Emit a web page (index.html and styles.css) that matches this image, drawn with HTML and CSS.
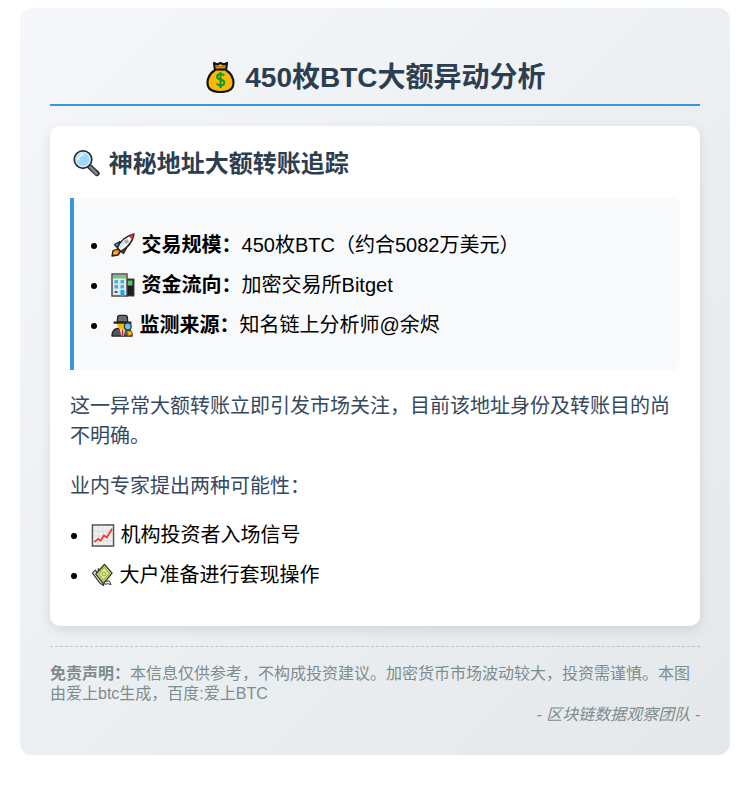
FILE: index.html
```html
<!DOCTYPE html>
<html lang="zh-CN">
<head>
<meta charset="utf-8">
<title>450枚BTC大额异动分析</title>
<link rel="stylesheet" href="styles.css">
</head>
<body>
<svg class="defs" width="0" height="0" aria-hidden="true">
  <symbol id="e-bag" viewBox="0 0 33 32">
    <path d="M10 2 13.300 3.500 16.500 2l3.200 1.500L23 2l-1 7c4.500 3 7.500 8 7.500 13 0 6-4.500 9-13 9s-13-3-13-9c0-5 3-10 7.500-13z" fill="#fdb900" stroke="#111" stroke-width="2.200" stroke-linejoin="round"/>
    <path d="M11 8.500h11" stroke="#111" stroke-width="2.200" fill="none"/>
    <path d="M11.500 5.800h10" stroke="#b87800" stroke-width="1.600" fill="none"/>
    <path d="M20.300 14.500c-1-1.200-2.400-1.600-3.800-1.600-2 0-3.500 1-3.500 2.800 0 3.800 7.300 1.900 7.300 5.800 0 1.800-1.700 2.900-3.800 2.900-1.500 0-3-.6-4-1.800M16.500 11v16" stroke="#0a9a2c" stroke-width="2" fill="none"/>
  </symbol>
  <symbol id="e-lens" viewBox="0 0 32 32">
    <path d="M19 19.500 28 28" stroke="#2b2f33" stroke-width="6" stroke-linecap="round"/>
    <path d="M20 20.500 27.500 28" stroke="#7d8b92" stroke-width="3" stroke-linecap="round"/>
    <circle cx="12" cy="12" r="10" fill="#8fd0f5" stroke="#2b2f33" stroke-width="2"/>
    <circle cx="12" cy="12" r="8" fill="#9fd8fa" stroke="#dbe6ec" stroke-width="1.500"/>
    <path d="M6.500 13a6 6 0 0 1 6-6.500" stroke="#e6f6ff" stroke-width="2" fill="none"/>
  </symbol>
  <symbol id="e-rocket" viewBox="0 0 24 24">
    <path d="M7 16 2 17.500 1 23l6-1 2.500-3.500z" fill="#f08a12" stroke="#222" stroke-width="1.300" stroke-linejoin="round"/>
    <path d="M3.500 20.500 4 19l2 1.500z" fill="#ffd23c" stroke="#ffd23c"/>
    <path d="M9 8.500 3.500 11.500 7 15.500z" fill="#2ea6ee" stroke="#222" stroke-width="1.300" stroke-linejoin="round"/>
    <path d="M15.500 15 12.500 20.500 8.500 17z" fill="#e8302a" stroke="#222" stroke-width="1.300" stroke-linejoin="round"/>
    <path d="M6.500 15C9 8 15 3 23 1c-1.500 8-6 13.500-13 17.500z" fill="#fff" stroke="#222" stroke-width="1.500" stroke-linejoin="round"/>
    <path d="M8 15.500C10 10 13 8 14.500 7c-1 3-3 6.500-5 9z" fill="#bfe3f8"/>
    <path d="M17.500 3 21 6.500 22.800 1.200z" fill="#e8302a"/>
    <circle cx="15.500" cy="8.500" r="2.300" fill="#aab0b6"/>
  </symbol>
  <symbol id="e-office" viewBox="0 0 24 24">
    <rect x="15" y="6" width="8" height="17" fill="#1d1f21" stroke="#444" stroke-width="1"/>
    <rect x="16.500" y="7.500" width="5" height="5" fill="#5fc26a"/>
    <rect x="1" y="1" width="15" height="22" fill="#e6e8ea" stroke="#444" stroke-width="1.400"/>
    <rect x="2" y="2" width="13" height="3.500" fill="#74c776"/>
    <rect x="3.500" y="7" width="3.500" height="3.500" fill="#38b6f2"/>
    <rect x="9.500" y="7" width="3.500" height="3.500" fill="#38b6f2"/>
    <rect x="3.500" y="12" width="3.500" height="3.500" fill="#38b6f2"/>
    <rect x="9.500" y="12" width="3.500" height="3.500" fill="#38b6f2"/>
    <rect x="3.500" y="18" width="3" height="2" fill="#4a5a70"/>
    <rect x="9.500" y="17" width="4" height="6" fill="#19a7e8"/>
  </symbol>
  <symbol id="e-spy" viewBox="0 0 24 24">
    <path d="M1 23.500c0-5 2.500-7.500 6-8h9c3.500.5 6 3 6 8z" fill="#54575a" stroke="#222" stroke-width="1.300" stroke-linejoin="round"/>
    <path d="M9 15.500h6l-1.800 8h-2.400z" fill="#f2f2f2"/>
    <path d="M11.200 17h1.600l.2 6.500h-2z" fill="#d8232a"/>
    <path d="M6.500 9.500h11v2a5.500 5.500 0 0 1-11 0z" fill="#fdb900"/>
    <path d="M6.500 9 7 3C9 .8 10.500 2.300 12 2 13.500 2.300 15 .8 17 3l.5 6z" fill="#6a6d70" stroke="#222" stroke-width="1.300" stroke-linejoin="round"/>
    <path d="M3.500 9.500h17" stroke="#222" stroke-width="2.200" stroke-linecap="round"/>
    <circle cx="17.500" cy="13.500" r="3.600" fill="#62c3ee" stroke="#333" stroke-width="1.300"/>
    <path d="M16.500 19c1-1 3-1 5-.5l.8 3.500-4.300 1.500z" fill="#fdb900" stroke="#8a6000" stroke-width=".9"/>
  </symbol>
  <symbol id="e-chart" viewBox="0 0 24 24">
    <rect x="1" y="1" width="22" height="22" fill="#f1f1f1" stroke="#555" stroke-width="1.600"/>
    <path d="M2 7.500h20M2 12.500h20M2 17.500h20M7 2v20M12 2v20M17 2v20" stroke="#d9d9d9" stroke-width="1"/>
    <path d="M3 19l4-3.500 2.500 2L13 12l3 2 5.500-9" fill="none" stroke="#ee3b2e" stroke-width="1.800"/>
  </symbol>
  <symbol id="e-wings" viewBox="0 0 24 24">
    <path d="M1.500 10 4.500 7 9 13 7.500 5.500 12 9l2 8-1 6-4-3z" fill="#e8e8e2" stroke="#333" stroke-width="1.200" stroke-linejoin="round"/>
    <path d="M14 1 5 11l8 10 9-11z" fill="#cfdc6a" stroke="#333" stroke-width="1.300" stroke-linejoin="round"/>
    <path d="M14 4 8 11l5 6.500 6-7z" fill="#e2ea98" stroke="#8f9a3a" stroke-width="1"/>
    <circle cx="13.500" cy="11" r="2" fill="none" stroke="#8f9a3a" stroke-width="1"/>
    <path d="M14 19l5-1 2 4-4-1-2 1z" fill="#efefe8" stroke="#333" stroke-width="1"/>
  </symbol>
</svg>
<main class="poster">
  <h1 class="title"><svg class="emoji emoji-title"><use href="#e-bag"/></svg> 450枚BTC大额异动分析</h1>
  <section class="card">
    <h2 class="subtitle"><svg class="emoji emoji-sub"><use href="#e-lens"/></svg> 神秘地址大额转账追踪</h2>
    <div class="callout">
      <ul class="list">
        <li class="item"><svg class="emoji emoji-wide"><use href="#e-rocket"/></svg> <strong>交易规模：</strong>450枚BTC（约合5082万美元）</li>
        <li class="item"><svg class="emoji emoji-wide"><use href="#e-office"/></svg> <strong>资金流向：</strong>加密交易所Bitget</li>
        <li class="item"><svg class="emoji emoji-spy"><use href="#e-spy"/></svg> <strong>监测来源：</strong>知名链上分析师@余烬</li>
      </ul>
    </div>
    <p class="para">这一异常大额转账立即引发市场关注，目前该地址身份及转账目的尚不明确。</p>
    <p class="para">业内专家提出两种可能性：</p>
    <ul class="list">
      <li class="item"><svg class="emoji emoji-chart"><use href="#e-chart"/></svg> 机构投资者入场信号</li>
      <li class="item"><svg class="emoji emoji-wings"><use href="#e-wings"/></svg> 大户准备进行套现操作</li>
    </ul>
  </section>
  <footer class="foot">
    <p class="note"><strong>免责声明：</strong>本信息仅供参考，不构成投资建议。加密货币市场波动较大，投资需谨慎。本图由爱上btc生成，百度:爱上BTC</p>
    <p class="sign">- 区块链数据观察团队 -</p>
  </footer>
</main>
</body>
</html>
```
FILE: styles.css
```css
* { box-sizing: border-box; }
html, body { background: #fff; }
body {
  margin: 8px;
  font-family: "Liberation Sans", "Noto Sans CJK SC", sans-serif;
  color: #000;
}
.defs { position: absolute; }
.poster {
  width: 710px;
  margin: 0 auto;
  padding: 30px;
  border-radius: 12px;
  background: linear-gradient(135deg, #f5f7fa 0%, #e4e8eb 100%);
}
.title {
  margin: 19px 0 20px;
  padding-bottom: 5px;
  border-bottom: 2px solid #3498db;
  font-size: 28px;
  line-height: 42px;
  font-weight: 700;
  color: #2c3e50;
  text-align: center;
}
.card {
  padding: 20px;
  border-radius: 10px;
  background: #fff;
  box-shadow: 0 4px 12px rgba(0, 0, 0, 0.1);
}
.subtitle {
  margin: 0 0 16px;
  font-size: 24px;
  line-height: 36px;
  font-weight: 700;
  color: #2c3e50;
}
.callout {
  margin-bottom: 20px;
  padding: 16px 16px 14px;
  border-left: 4px solid #3498db;
  border-radius: 0 8px 8px 0;
  background: #f8f9fa;
}
.list {
  margin: 16px 0;
  padding-left: 20px;
}
.item {
  margin-bottom: 10px;
  font-size: 20px;
  line-height: 30px;
}
.para {
  margin: 19px 0;
  padding-top: 1px;
  font-size: 20px;
  line-height: 30px;
  color: #34495e;
}
.emoji { display: inline-block; vertical-align: -5px; }
.emoji-title { width: 33px; height: 32px; vertical-align: -6px; }
.emoji-sub { width: 31px; height: 28px; margin-left: 1px; vertical-align: -5px; }
.emoji-wide { width: 24px; height: 24px; margin-left: 1px; margin-right: 1px; }
.emoji-spy { width: 23px; height: 24px; margin-left: 1px; }
.emoji-chart { width: 24px; height: 23px; margin-left: 1px; }
.emoji-wings { width: 23px; height: 24px; margin-left: 1px; }
.foot {
  margin-top: 20px;
  padding-top: 17px;
  border-top: 1px dashed #bdc3c7;
  font-size: 16px;
  line-height: 20px;
  color: #7f8c8d;
}
.note { margin: 0; }
.sign { margin: 1px 0 0; text-align: right; font-style: italic; color: #7f8c8d; }
```
